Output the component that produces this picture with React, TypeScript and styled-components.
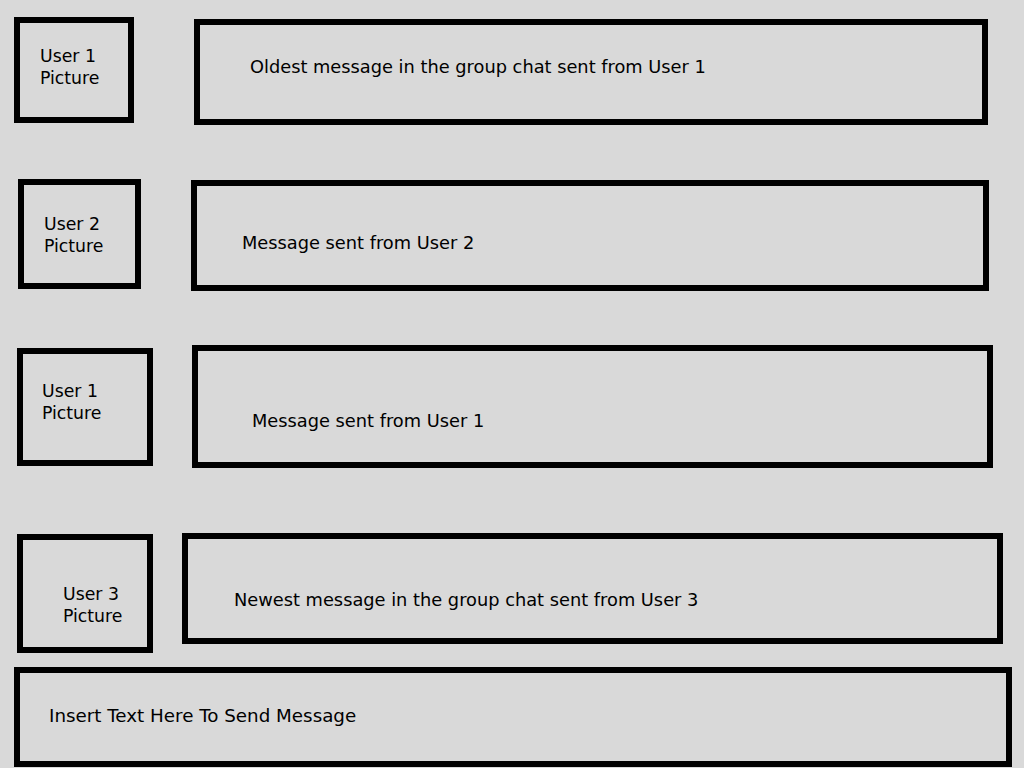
import React from "react";
import styled, { createGlobalStyle } from "styled-components";

const Global = createGlobalStyle`
  html, body {
    margin: 0;
    padding: 0;
    background: #d9d9d9;
  }
  body {
    font-family: "DejaVu Sans", Verdana, sans-serif;
    color: #000;
  }
  * { box-sizing: border-box; }
`;

const Page = styled.div`
  width: 1024px;
  height: 768px;
  overflow: hidden;
  padding-top: 17px;
  display: flex;
  flex-direction: column;
`;

const Row = styled.div<{ $h: number }>`
  display: flex;
  align-items: flex-start;
  height: ${(p) => p.$h}px;
  flex: none;
`;

const PictureBox = styled.div<{
  $ml: number;
  $mt: number;
  $w: number;
  $h: number;
  $pl: number;
  $pt: number;
}>`
  flex: none;
  margin-left: ${(p) => p.$ml}px;
  margin-top: ${(p) => p.$mt}px;
  width: ${(p) => p.$w}px;
  height: ${(p) => p.$h}px;
  border: 6px solid #000;
  padding-left: ${(p) => p.$pl}px;
  padding-top: ${(p) => p.$pt}px;
  font-size: 17.3px;
  line-height: 22px;
  white-space: nowrap;
`;

const MessageBox = styled.div<{
  $ml: number;
  $mt: number;
  $w: number;
  $h: number;
  $pl: number;
  $pt: number;
}>`
  flex: none;
  margin-left: ${(p) => p.$ml}px;
  margin-top: ${(p) => p.$mt}px;
  width: ${(p) => p.$w}px;
  height: ${(p) => p.$h}px;
  border: 6px solid #000;
  padding-left: ${(p) => p.$pl}px;
  padding-top: ${(p) => p.$pt}px;
  font-size: 17.8px;
  line-height: 22px;
  white-space: nowrap;
`;

const InputBox = styled.div`
  flex: none;
  margin-left: 14px;
  width: 998px;
  height: 100px;
  border: 6px solid #000;
  padding-left: 29px;
  padding-top: 32px;
  font-size: 18.3px;
  line-height: 22px;
  white-space: nowrap;
`;

type Item = {
  rowH: number;
  user: string;
  pic: { ml: number; mt: number; w: number; h: number; pl: number; pt: number };
  msg: { ml: number; mt: number; w: number; h: number; pl: number; pt: number };
  text: string;
};

const items: Item[] = [
  {
    rowH: 162,
    user: "User 1",
    pic: { ml: 14, mt: 0, w: 120, h: 106, pl: 20, pt: 22 },
    msg: { ml: 60, mt: 2, w: 794, h: 106, pl: 50, pt: 31 },
    text: "Oldest message in the group chat sent from User 1",
  },
  {
    rowH: 166,
    user: "User 2",
    pic: { ml: 18, mt: 0, w: 123, h: 110, pl: 20, pt: 28 },
    msg: { ml: 50, mt: 1, w: 798, h: 111, pl: 45, pt: 46 },
    text: "Message sent from User 2",
  },
  {
    rowH: 188,
    user: "User 1",
    pic: { ml: 17, mt: 3, w: 136, h: 118, pl: 19, pt: 26 },
    msg: { ml: 39, mt: 0, w: 801, h: 123, pl: 54, pt: 59 },
    text: "Message sent from User 1",
  },
  {
    rowH: 134,
    user: "User 3",
    pic: { ml: 17, mt: 1, w: 136, h: 119, pl: 40, pt: 43 },
    msg: { ml: 29, mt: 0, w: 821, h: 111, pl: 46, pt: 50 },
    text: "Newest message in the group chat sent from User 3",
  },
];

export default function App() {
  return (
    <>
      <Global />
      <Page>
        {items.map((it, i) => (
          <Row key={i} $h={it.rowH}>
            <PictureBox
              $ml={it.pic.ml}
              $mt={it.pic.mt}
              $w={it.pic.w}
              $h={it.pic.h}
              $pl={it.pic.pl}
              $pt={it.pic.pt}
            >
              {it.user}
              <br />
              Picture
            </PictureBox>
            <MessageBox
              $ml={it.msg.ml}
              $mt={it.msg.mt}
              $w={it.msg.w}
              $h={it.msg.h}
              $pl={it.msg.pl}
              $pt={it.msg.pt}
            >
              {it.text}
            </MessageBox>
          </Row>
        ))}
        <InputBox>Insert Text Here To Send Message</InputBox>
      </Page>
    </>
  );
}
